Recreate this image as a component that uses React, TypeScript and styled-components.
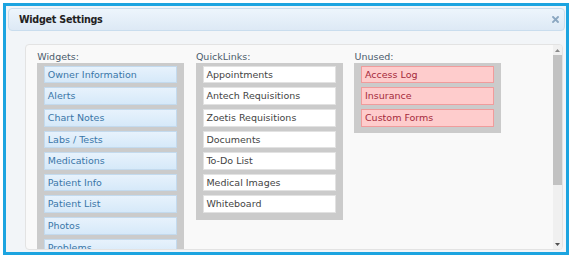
import styled, { createGlobalStyle } from "styled-components";

const widgets = [
  "Owner Information",
  "Alerts",
  "Chart Notes",
  "Labs / Tests",
  "Medications",
  "Patient Info",
  "Patient List",
  "Photos",
  "Problems",
  "Reminders",
  "Vaccinations",
  "Weight Chart",
];

const quickLinks = [
  "Appointments",
  "Antech Requisitions",
  "Zoetis Requisitions",
  "Documents",
  "To-Do List",
  "Medical Images",
  "Whiteboard",
];

const unused = ["Access Log", "Insurance", "Custom Forms"];

type Kind = "widget" | "link" | "unused";

const columns: { title: string; kind: Kind; items: string[] }[] = [
  { title: "Widgets:", kind: "widget", items: widgets },
  { title: "QuickLinks:", kind: "link", items: quickLinks },
  { title: "Unused:", kind: "unused", items: unused },
];

function App() {
  return (
    <>
      <GlobalStyle />
      <Dialog>
        <TitleBar>
          <Title>Widget Settings</Title>
          <CloseButton aria-label="close">
            <svg width="7" height="7" viewBox="0 0 7 7">
              <path
                d="M1 1L6 6M6 1L1 6"
                stroke="#8ba7c1"
                strokeWidth="1.9"
                strokeLinecap="square"
              />
            </svg>
          </CloseButton>
        </TitleBar>
        <Body>
          <Panel>
            <Content>
              <Columns>
                {columns.map(({ title, kind, items }) => (
                  <Column key={title}>
                    <Label>{title}</Label>
                    <List>
                      {items.map((item) => (
                        <Item key={item} $kind={kind}>
                          {item}
                        </Item>
                      ))}
                    </List>
                  </Column>
                ))}
              </Columns>
            </Content>
            <Scrollbar>
              <ScrollButton>
                <svg width="5" height="3" viewBox="0 0 5 3">
                  <path d="M0 3h5L2.5 0z" fill="#8a8a8a" />
                </svg>
              </ScrollButton>
              <Track>
                <Thumb />
              </Track>
              <ScrollButton>
                <svg width="5" height="3" viewBox="0 0 5 3">
                  <path d="M0 0h5L2.5 3z" fill="#505050" />
                </svg>
              </ScrollButton>
            </Scrollbar>
          </Panel>
        </Body>
      </Dialog>
    </>
  );
}

const GlobalStyle = createGlobalStyle`
  html, body {
    margin: 0;
    background: #ffffff;
  }

  body {
    font-family: "DejaVu Sans", Verdana, sans-serif;
  }
`;

const Dialog = styled.div`
  background-color: #f2f5f8;
  border: 3px solid #1ca4e0;
  box-sizing: border-box;
  height: 252px;
  margin: 3px;
  padding: 2px 1px 2px 2px;
  width: 566px;
`;

const TitleBar = styled.div`
  align-items: center;
  background: linear-gradient(#edf5fc, #dde9f5);
  border: 1px solid #c9ddee;
  border-radius: 4px;
  box-sizing: border-box;
  display: flex;
  height: 23px;
  justify-content: space-between;
  padding: 0 5px 0 10px;
`;

const Title = styled.span`
  color: #222;
  font-size: 9.6px;
  font-weight: bold;
  letter-spacing: -0.25px;
`;

const CloseButton = styled.span`
  display: flex;
`;

const Body = styled.div`
  padding: 13px 0 0 17px;
`;

const Panel = styled.div`
  background-color: #f9f9f9;
  border: 1px solid #e3e3e3;
  border-radius: 4px;
  box-sizing: border-box;
  display: flex;
  height: 206px;
  overflow: hidden;
  width: 538px;
`;

const Content = styled.div`
  flex: 1;
  overflow: hidden;
  padding: 5.5px 0 6px 11.3px;
`;

const Scrollbar = styled.div`
  background-color: #f0f0f0;
  display: flex;
  flex-direction: column;
  width: 9px;
`;

const ScrollButton = styled.div`
  align-items: center;
  display: flex;
  height: 10px;
  justify-content: center;
`;

const Track = styled.div`
  flex: 1;
`;

const Thumb = styled.div`
  background-color: #c2c2c2;
  height: 130px;
`;

const Columns = styled.div`
  align-items: flex-start;
  display: flex;
  gap: 11.6px;
`;

const Column = styled.div`
  display: flex;
  flex-direction: column;
  width: 147px;
`;

const Label = styled.div`
  color: #4b5b6b;
  font-size: 9.5px;
  line-height: 12px;
`;

const List = styled.div`
  background-color: #cbcbcb;
  display: flex;
  flex-direction: column;
  gap: 4px;
  padding: 3.4px 7px 6.7px 7px;
`;

const itemColors = {
  widget: {
    background: "linear-gradient(#e7f2fc, #d6e9f9)",
    border: "#c3daee",
    color: "#3a76a8",
  },
  link: {
    background: "#ffffff",
    border: "#e2e2e2",
    color: "#444444",
  },
  unused: {
    background: "#fecccc",
    border: "#f09c9c",
    color: "#a52a3b",
  },
};

const Item = styled.div<{ $kind: Kind }>`
  background: ${(props) => itemColors[props.$kind].background};
  border: 1px solid ${(props) => itemColors[props.$kind].border};
  box-sizing: border-box;
  color: ${(props) => itemColors[props.$kind].color};
  flex-shrink: 0;
  font-size: 9.5px;
  height: 17.6px;
  line-height: 15.6px;
  padding: 0 2.5px;
  white-space: nowrap;
`;

export default App;
